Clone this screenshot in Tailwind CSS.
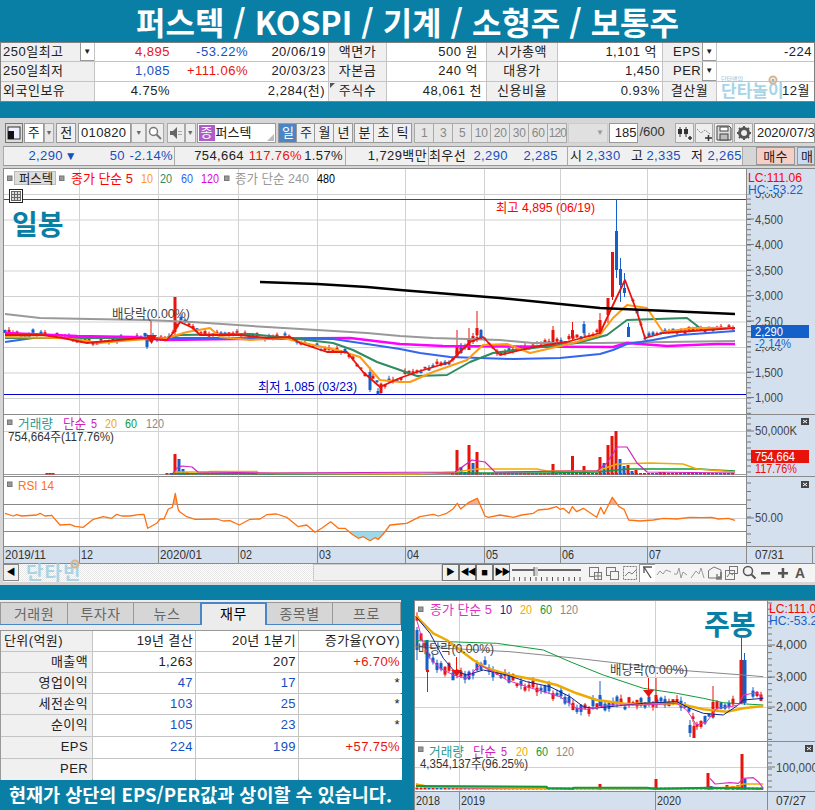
<!DOCTYPE html>
<html lang="ko">
<head>
    <meta charset="UTF-8">
    <title>퍼스텍 차트</title>
    <script src="https://cdn.jsdelivr.net/npm/@tailwindcss/browser@4"></script>
</head>
<body class="bg-[#0a7fa5]">
<div class="relative w-[815px] h-[810px] overflow-hidden bg-[#0a7fa5] text-[13px] leading-[18px] text-[#222] font-[family-name:'Liberation_Sans','Noto_Sans_CJK_KR',sans-serif]">

    <!-- title -->
    <div class="h-[42px] flex items-center justify-center text-white text-[32px] leading-[42px] font-bold whitespace-nowrap font-[family-name:'Noto_Sans_CJK_KR',sans-serif]">퍼스텍 / KOSPI / 기계 / 소형주 / 보통주</div>

    <!-- summary table -->
    <div class="relative h-[60px] border border-[#808080] bg-[#c4c4c4] grid gap-px grid-cols-[93px_233px_57px_99px_70px_104px_53px_97px] grid-rows-[18px_19px_19px] tracking-[0.5px]">
        <div class="bg-[#f0f0f0] flex justify-between pl-[2px]"><span>250일최고</span><span class="w-[14px] bg-white border-l border-b border-[#999] flex items-center justify-center text-[8px]">▼</span></div>
        <div class="bg-white grid grid-cols-[75px_78px_78px]"><span class="text-right text-[#e8140c]">4,895</span><span class="text-right text-[#1450c0]">-53.22%</span><span class="text-right">20/06/19</span></div>
        <div class="bg-[#f0f0f0] text-center">액면가</div>
        <div class="bg-white text-right pr-2">500 원</div>
        <div class="bg-[#f0f0f0] text-center">시가총액</div>
        <div class="bg-white text-right pr-[5px]">1,101 억</div>
        <div class="bg-[#f0f0f0] flex justify-between pl-[10px]"><span>EPS</span><span class="w-[14px] bg-white border-l border-b border-[#999] flex items-center justify-center text-[8px]">▼</span></div>
        <div class="bg-white text-right pr-[2px]">-224</div>

        <div class="bg-[#f0f0f0] pl-[2px]">250일최저</div>
        <div class="bg-white grid grid-cols-[75px_78px_78px]"><span class="text-right text-[#1450c0]">1,085</span><span class="text-right text-[#e8140c]">+111.06%</span><span class="text-right">20/03/23</span></div>
        <div class="bg-[#f0f0f0] text-center">자본금</div>
        <div class="bg-white text-right pr-2">240 억</div>
        <div class="bg-[#f0f0f0] text-center">대용가</div>
        <div class="bg-white text-right pr-[2px]">1,450</div>
        <div class="bg-[#f0f0f0] flex justify-between pl-[10px]"><span>PER</span><span class="w-[14px] bg-white border-l border-b border-[#999] flex items-center justify-center text-[8px]">▼</span></div>
        <div class="bg-white"></div>

        <div class="bg-[#f0f0f0] pl-[2px]">외국인보유</div>
        <div class="bg-white grid grid-cols-[75px_78px_78px]"><span class="text-right">4.75%</span><span></span><span class="text-right pr-[1px]">2,284(천)</span></div>
        <div class="relative bg-[#f0f0f0] text-center"><svg class="absolute left-[1px] top-[1px]" width="5" height="5"><polygon points="0,0 5,0 0,5" fill="#555"/></svg>주식수</div>
        <div class="bg-white text-right pr-[4px]">48,061 천</div>
        <div class="bg-[#f0f0f0] text-center">신용비율</div>
        <div class="bg-white text-right pr-[2px]">0.93%</div>
        <div class="bg-[#f0f0f0] text-center">결산월</div>
        <div class="relative bg-white text-right pr-[4px]">12월</div>

        <!-- watermark over the table -->
        <div class="absolute left-[720px] top-[33px] flex flex-col items-start tracking-normal">
            <span class="text-[6px] leading-[7px] text-[#8fc4dc]">단타맨의</span>
            <span class="text-[17px] leading-[18px] font-bold text-[#a8d4e6]">단타놀이</span>
        </div>
        <svg class="absolute left-[767px] top-[32px]" width="10" height="10"><circle cx="5" cy="5" r="3.5" fill="none" stroke="#d9b38c" stroke-width="2"/><circle cx="5" cy="5" r="1.5" fill="#8db4d8"/></svg>
    </div>

    <div class="h-[16px]"></div>

    <!-- main window -->
    <div class="h-[467px] bg-[#d6d6d6]">
        <!-- toolbar -->
        <div class="h-[28px] pt-[5px] pl-[5px] flex gap-px text-[13px] leading-[18px]">
            <div class="w-[18px] h-5 border border-[#777] bg-[#ddd] flex items-center justify-center">
                <svg width="14" height="14"><rect x="1" y="1" width="12" height="12" fill="#eef" stroke="#333"/><rect x="1" y="5" width="6" height="8" fill="#111"/></svg>
            </div>
            <div class="w-[20px] h-5 border border-[#999] bg-white text-center">주</div>
            <div class="w-[11px] h-5 border border-[#aaa] bg-[#e8e8e8] -ml-px text-[7px] text-[#666] flex items-center justify-center">▼</div>
            <div class="w-[20px] h-5 ml-px border border-[#999] bg-[#f0f0f0] text-center">전</div>
            <div class="w-[54px] h-5 ml-px border border-[#999] bg-white pl-[2px] tracking-[0.3px]">010820</div>
            <div class="w-[15px] h-5 -ml-px border border-[#aaa] bg-[#eee] text-[7px] text-[#666] flex items-center justify-center">▼</div>
            <div class="w-[18px] h-5 -ml-px border border-[#aaa] bg-[#eee] flex items-center justify-center">
                <svg width="14" height="14"><circle cx="5.5" cy="5.5" r="4" fill="#fff" stroke="#777" stroke-width="1.5"/><path d="M8.5 8.5 L13 13" stroke="#777" stroke-width="2"/></svg>
            </div>
            <div class="w-[18px] h-5 ml-[2px] border border-[#aaa] bg-[#eee] flex items-center justify-center">
                <svg width="14" height="14"><path d="M1 5 H4 L8 1 V13 L4 9 H1 Z" fill="#666"/><path d="M10 5 V6 M10 8 V9 M12 5 V6 M12 8 V9" stroke="#666"/></svg>
            </div>
            <div class="w-[11px] h-5 -ml-px border border-[#aaa] bg-[#eee] text-[7px] text-[#666] flex items-center justify-center">▼</div>
            <div class="relative w-[81px] h-5 border border-[#999] bg-white flex items-center pl-[1px] gap-[1px]">
                <span class="w-[16px] h-4 bg-[#b05cc8] text-white text-center text-[13px] leading-4">종</span><span>퍼스텍</span>
                <svg class="absolute right-[1px] bottom-[1px]" width="7" height="7"><polygon points="7,0 7,7 0,7" fill="#bbb"/></svg>
            </div>
            <div class="flex ml-px">
                <div class="w-[19px] h-5 bg-[#4a86c5] text-white text-center border border-[#999]">일</div>
                <div class="w-[19px] h-5 -ml-px bg-[#f0f0f0] text-center border border-[#999]">주</div>
                <div class="w-[20px] h-5 -ml-px bg-[#f0f0f0] text-center border border-[#999]">월</div>
                <div class="w-[20px] h-5 -ml-px bg-[#f0f0f0] text-center border border-[#999]">년</div>
            </div>
            <div class="flex">
                <div class="w-[20px] h-5 bg-[#f0f0f0] text-center border border-[#999]">분</div>
                <div class="w-[20px] h-5 -ml-px bg-[#f0f0f0] text-center border border-[#999]">초</div>
                <div class="w-[20px] h-5 -ml-px bg-[#f0f0f0] text-center border border-[#999]">틱</div>
            </div>
            <div class="flex ml-px text-[#888] text-[12px]">
                <div class="w-[20px] h-5 bg-[#e6e6e6] text-center border border-[#aaa]">1</div>
                <div class="w-[20px] h-5 -ml-px bg-[#e6e6e6] text-center border border-[#aaa]">3</div>
                <div class="w-[20px] h-5 -ml-px bg-[#e6e6e6] text-center border border-[#aaa]">5</div>
                <div class="w-[20px] h-5 -ml-px bg-[#e6e6e6] text-center border border-[#aaa]">10</div>
                <div class="w-[20px] h-5 -ml-px bg-[#e6e6e6] text-center border border-[#aaa]">20</div>
                <div class="w-[20px] h-5 -ml-px bg-[#e6e6e6] text-center border border-[#aaa]">30</div>
                <div class="w-[20px] h-5 -ml-px bg-[#e6e6e6] text-center border border-[#aaa]">60</div>
                <div class="w-[20px] h-5 -ml-px bg-[#e6e6e6] text-center border border-[#aaa] tracking-[-1px]">120</div>
            </div>
            <div class="w-[40px] h-5 bg-[#e0e0e0] border border-[#ccc] text-[8px] text-[#999] text-right pr-[3px]">▼</div>
            <div class="w-[30px] h-5 bg-white border border-[#999] text-right pr-[1px]">185</div>
            <div class="w-[35px] h-5 text-[#333]">/600</div>
            <div class="w-[19px] h-5 bg-[#eee] border border-[#aaa] flex items-center justify-center">
                <svg width="16" height="16"><path d="M4 2 V12 M10 2 V12" stroke="#333"/><rect x="2" y="4" width="4" height="5" fill="#333"/><rect x="8" y="4" width="4" height="5" fill="#333"/><path d="M12 13 H16 M14 11 V15" stroke="#333" stroke-width="1.5"/></svg>
            </div>
            <div class="w-[19px] h-5 bg-[#eee] border border-[#aaa] flex items-center justify-center">
                <svg width="16" height="16"><path d="M1 4 L5 8 L9 5 L14 9" fill="none" stroke="#888" stroke-dasharray="2 1"/><path d="M9 13 H16 M12.500 10 V16" stroke="#333" stroke-width="1.5"/></svg>
            </div>
            <div class="w-[19px] h-5 bg-[#eee] border border-[#aaa] flex items-center justify-center">
                <svg width="16" height="16"><path d="M1 1 H13 L15 3 V15 H1 Z" fill="#ddd" stroke="#444"/><rect x="4" y="2" width="8" height="4" fill="#fff" stroke="#444"/><rect x="4" y="9" width="8" height="6" fill="#bbb" stroke="#444"/></svg>
            </div>
            <div class="w-[19px] h-5 bg-[#eee] border border-[#aaa] flex items-center justify-center">
                <svg width="16" height="16"><circle cx="8" cy="8" r="4.500" fill="none" stroke="#555" stroke-width="3"/><path d="M8 1 V3 M8 13 V15 M1 8 H3 M13 8 H15 M3 3 L4.500 4.500 M11.500 11.500 L13 13 M13 3 L11.500 4.500 M3 13 L4.500 11.500" stroke="#555" stroke-width="2"/></svg>
            </div>
            <div class="w-[62px] h-5 bg-white border border-[#999] pl-[2px] whitespace-nowrap overflow-hidden">2020/07/31</div>
        </div>

        <!-- quote bar -->
        <div class="ml-[3px] h-[20px] flex border-y border-[#999] text-[#1450c0] leading-[18px] tracking-[0.4px]">
            <div class="w-[172px] flex bg-[#f0f0f0] border-l border-r border-[#aaa]">
                <span class="w-[59px] text-right">2,290</span><span class="w-[14px] text-[12px] text-right leading-[18px]">▼</span>
                <span class="w-[48px] text-right">50</span><span class="w-[48px] text-right">-2.14%</span>
            </div>
            <div class="w-[171px] flex bg-[#f0f0f0] border-r border-[#aaa]">
                <span class="w-[69px] text-right text-[#222]">754,664</span><span class="w-[58px] text-right text-[#e8140c]">117.76%</span><span class="w-[41px] text-right text-[#222]">1.57%</span>
            </div>
            <div class="w-[83px] bg-[#f0f0f0] border-r border-[#aaa] text-right pr-[1px] text-[#222]">1,729백만</div>
            <div class="w-[139px] flex bg-[#f0f0f0] border-r border-[#aaa]">
                <span class="w-[38px] shrink-0 text-[#222] whitespace-nowrap">최우선</span><span class="w-[41px] text-right">2,290</span><span class="w-[50px] text-right">2,285</span>
            </div>
            <div class="w-[175px] flex bg-[#f0f0f0] border-r border-[#aaa]">
                <span class="w-[18px] pl-[2px] text-[#222]">시</span><span class="w-[34px] text-right">2,330</span><span class="ml-[11px] w-[13px] text-[#222]">고</span><span class="w-[37px] text-right">2,335</span><span class="ml-[10px] w-[13px] text-[#222]">저</span><span class="w-[38px] text-right">2,265</span>
            </div>
            <div class="w-[13px] bg-[#d6d6d6]"></div>
            <div class="w-[39px] bg-[#f4cfc8] border border-[#999] text-center text-[#222]">매수</div>
            <div class="flex-1 ml-[2px] bg-[#c8dcf4] border border-[#999] text-[#222] pl-[3px] overflow-hidden">매</div>
        </div>

        <!-- charts -->
        <div class="ml-[3px] mt-[2px] w-[812px] border-t border-[#8a8a8a]">
            <svg id="pane-main" class="block w-[812px] h-[245px]" viewBox="3 169 812 245"></svg>
            <svg id="pane-vol" class="block w-[812px] h-[62px]" viewBox="3 414 812 62"></svg>
            <svg id="pane-rsi" class="block w-[812px] h-[70px]" viewBox="3 476 812 70"></svg>
            <svg id="pane-axis" class="block w-[812px] h-[18px]" viewBox="3 546 812 18"></svg>
        </div>

        <!-- scroll bar and chart tools -->
        <div class="relative ml-[3px] w-[812px] h-[18px] flex bg-[#f4f4f4]">
            <div class="w-[16px] h-[17px] bg-[#f0f0f0] border border-[#888] text-[9px] leading-[15px] text-center text-black">◀</div>
            <div class="w-[294px] h-[17px] bg-[repeating-conic-gradient(#e6e6e6_0_25%,#ffffff_0_50%)] bg-[length:2px_2px]"></div>
            <div class="w-[129px] h-[17px] bg-[#f0f0f0] border border-[#ccc]"></div>
            <div class="w-[17px] h-[17px] bg-[#f0f0f0] border border-[#777] text-[9px] leading-[15px] text-center text-black">▶</div>
            <div class="w-[17px] h-[17px] bg-[#f0f0f0] border border-[#777] text-[9px] leading-[15px] text-center text-black tracking-[-2px]">◀◀</div>
            <div class="w-[17px] h-[17px] bg-[#f0f0f0] border border-[#777] text-[11px] leading-[14px] text-center text-black">■</div>
            <div class="w-[17px] h-[17px] bg-[#f0f0f0] border border-[#777] text-[9px] leading-[15px] text-center text-black tracking-[-2px]">▶▶</div>
            <svg id="tools" class="block w-[301px] h-[18px]" viewBox="514 564 301 18"></svg>

            <!-- watermark over the scroll bar -->
            <span class="absolute left-[23px] top-[-2px] text-[19px] leading-[24px] font-bold text-[#a8d4e6] tracking-[1px]">단타빈</span>
            <svg class="absolute left-[67px] top-[-5px]" width="10" height="10"><circle cx="5" cy="5" r="3.500" fill="none" stroke="#d9b38c" stroke-width="2"/><circle cx="5" cy="5" r="1.500" fill="#8db4d8"/></svg>
        </div>
    </div>

    <div class="h-[15px]"></div>

    <!-- bottom area -->
    <div class="h-[210px] flex">
        <div class="w-[401px] flex flex-col">
            <!-- tabs -->
            <div class="h-[30px] pt-[2px] bg-[#ececec]">
                <div class="h-[23px] flex border-b border-[#4a86c5] text-[14px] leading-[22px] text-center text-[#666] tracking-[0.5px]">
                    <div class="w-[68px] bg-[#d6d6d6] border border-b-0 border-[#999]">거래원</div>
                    <div class="w-[66px] bg-[#d6d6d6] border-t border-r border-[#999]">투자자</div>
                    <div class="w-[66px] bg-[#d6d6d6] border-t border-[#999]">뉴스</div>
                    <div class="w-[67px] h-[23px] bg-[#ececec] border-2 border-b-0 border-[#4a86c5] text-black leading-[20px]">재무</div>
                    <div class="w-[66px] bg-[#d6d6d6] border-t border-r border-[#999]">종목별</div>
                    <div class="w-[68px] bg-[#d6d6d6] border-t border-r border-[#999]">프로</div>
                </div>
            </div>
            <!-- financials -->
            <div class="h-[150px] border border-[#999] bg-[#c4c4c4] grid gap-px grid-cols-[91px_102px_102px_103px] grid-rows-[20px_20px_20px_20px_21px_21px_21px] leading-[20px] tracking-[0.4px]">
                <div class="bg-[#f0f0f0] pl-[3px]">단위(억원)</div>
                <div class="bg-white text-right pr-[2px]">19년 결산</div>
                <div class="bg-white text-right pr-[2px]">20년 1분기</div>
                <div class="bg-white text-right pr-[2px]">증가율(YOY)</div>

                <div class="bg-[#f0f0f0] text-right pr-1">매출액</div>
                <div class="bg-white text-right pr-[2px]">1,263</div>
                <div class="bg-white text-right pr-[2px]">207</div>
                <div class="bg-white text-right pr-[2px] text-[#e8140c]">+6.70%</div>

                <div class="bg-[#f0f0f0] text-right pr-1">영업이익</div>
                <div class="bg-white text-right pr-[2px] text-[#1450c0]">47</div>
                <div class="bg-white text-right pr-[2px] text-[#1450c0]">17</div>
                <div class="bg-white text-right pr-[2px]">*</div>

                <div class="bg-[#f0f0f0] text-right pr-1">세전손익</div>
                <div class="bg-white text-right pr-[2px] text-[#1450c0]">103</div>
                <div class="bg-white text-right pr-[2px] text-[#1450c0]">25</div>
                <div class="bg-white text-right pr-[2px]">*</div>

                <div class="bg-[#f0f0f0] text-right pr-1">순이익</div>
                <div class="bg-white text-right pr-[2px] text-[#1450c0]">105</div>
                <div class="bg-white text-right pr-[2px] text-[#1450c0]">23</div>
                <div class="bg-white text-right pr-[2px]">*</div>

                <div class="bg-[#f0f0f0] text-right pr-1">EPS</div>
                <div class="bg-white text-right pr-[2px] text-[#1450c0]">224</div>
                <div class="bg-white text-right pr-[2px] text-[#1450c0]">199</div>
                <div class="bg-white text-right pr-[2px] text-[#e8140c]">+57.75%</div>

                <div class="bg-[#f0f0f0] text-right pr-1">PER</div>
                <div class="bg-white"></div>
                <div class="bg-white"></div>
                <div class="bg-white"></div>
            </div>
            <div class="h-[30px] text-center text-white text-[18.500px] leading-[28px] font-bold font-[family-name:'Noto_Sans_CJK_KR',sans-serif] whitespace-nowrap">현재가 상단의 EPS/PER값과 상이할 수 있습니다.</div>
        </div>
        <div class="w-[13px]"></div>
        <div class="w-[401px] border-t border-[#8a8a8a]">
            <svg id="week-main" class="block w-[401px] h-[140px]" viewBox="414 601 401 140"></svg>
            <svg id="week-vol" class="block w-[401px] h-[50px]" viewBox="414 741 401 50"></svg>
            <svg id="week-axis" class="block w-[401px] h-[19px]" viewBox="414 791 401 19"></svg>
        </div>
    </div>
</div>

<script>
    const FONT = "'Liberation Sans','Noto Sans CJK KR',sans-serif";
    const AXIS = "#d5e0ee", GRID = "#d2d2d2", FRAME = "#8a8a8a";
    const RED = "#e8140c", BLUE = "#1460c8";

    let seed = 12345;
    function rnd() {
        seed = (seed * 16807) % 2147483647;
        return seed / 2147483647;
    }

    function line(x1, y1, x2, y2, color, w = 1) {
        return `<line x1="${x1}" y1="${y1}" x2="${x2}" y2="${y2}" stroke="${color}" stroke-width="${w}"/>`;
    }
    function rect(x, y, w, h, color) {
        return `<rect x="${x}" y="${y}" width="${w}" height="${h}" fill="${color}"/>`;
    }
    function poly(pts, color, w) {
        return `<polyline points="${pts.map(p => p.join(",")).join(" ")}" fill="none" stroke="${color}" stroke-width="${w}" stroke-linejoin="round"/>`;
    }
    // y is the text's vertical centre, len squeezes it to the width in the picture
    function text(x, y, str, color = "#333", size = 13, len = 0, weight = 400) {
        const fit = len ? ` textLength="${len}" lengthAdjust="spacingAndGlyphs"` : "";
        return `<text x="${x}" y="${y + size * 0.36}" fill="${color}" font-size="${size}" font-weight="${weight}" font-family="${FONT}"${fit}>${str}</text>`;
    }
    function square(x, y) {
        return `<rect x="${x}" y="${y}" width="4.500" height="4.500" fill="#999" stroke="#777"/>`;
    }
    function closeIcon(x, y) {
        return rect(x, y, 8, 7, "#444") + line(x + 2, y + 2, x + 6, y + 5, "#fff") + line(x + 6, y + 2, x + 2, y + 5, "#fff");
    }
    function interp(pts, x) {
        for (let i = 1; i < pts.length; i++) {
            if (x <= pts[i][0]) {
                const [x0, y0] = pts[i - 1], [x1, y1] = pts[i];
                return y0 + (y1 - y0) * (x - x0) / (x1 - x0);
            }
        }
        return pts[pts.length - 1][1];
    }
    function candle(x, wickTop, top, bottom, wickBottom, color, w = 3) {
        return line(x, wickTop, x, wickBottom, color) + rect(x - w / 2, top, w, Math.max(bottom - top, 1), color);
    }
    function zoomPts(pts, ox, oy) {
        return pts.map(([X, Y]) => [+(ox + X / 3).toFixed(1), +(oy + Y / 3).toFixed(1)]);
    }

    /* ---------- daily: main pane ---------- */
    const ma480 = [[260,282],[317,284],[367,287],[400,290],[500,298],[600,308],[735,314]];
    const ma240 = [[5,314],[40,318],[90,319],[147,320],[192,322],[267,327],[317,330],[367,333],[400,336],[433,338],[500,340],[533,343],[600,343],[735,341]];
    const ma120 = [[5,333],[77,336],[133,337],[167,340],[233,339],[350,338],[400,344],[443,346],[613,347],[627,343],[667,346],[717,344],[735,344]];
    const ma60 = [[5,342],[33,338],[100,338],[233,338],[333,339],[367,344],[400,349],[420,353],[450,357],[513,359],[560,358],[600,354],[613,350],[627,344],[653,340],[680,335],[735,331]];
    const ma20 = [[5,338],[167,338],[180,335],[250,334],[290,338],[333,343],[353,350],[377,362],[400,370],[417,376],[447,375],[470,362],[493,353],[533,348],[577,343],[607,335],[627,320],[687,318],[700,328],[735,328]];
    const ma10 = [[5,337],[60,338],[80,340],[100,343],[133,340],[167,338],[187,332],[210,328],[220,337],[250,340],[283,338],[313,345],[337,350],[360,357],[380,380],[400,382],[410,382],[433,372],[467,360],[483,345],[507,344],[530,353],[573,343],[600,335],[613,318],[627,305],[647,308],[663,332],[693,328],[735,328]];
    const ma5 = [[5,335],[43,335],[63,338],[87,343],[97,342],[140,338],[167,340],[173,333],[180,322],[193,328],[200,335],[240,335],[267,338],[290,337],[300,343],[327,352],[347,352],[363,372],[380,387],[400,378],[417,372],[450,362],[470,342],[483,337],[500,355],[533,347],[567,342],[600,333],[613,305],[625,280],[637,312],[645,338],[663,333],[735,328]];

    let h = rect(3, 169, 744, 245, "#fff") + rect(747, 169, 68, 245, AXIS) + line(746.500, 169, 746.500, 414, FRAME);
    for (let i = 0; i < 9; i++) h += line(4, 194.500 + i * 25.500, 746, 194.500 + i * 25.500, GRID);
    for (const x of [79.500, 158.500, 238.500, 317.500, 405.500, 484.500, 560.500, 647.500]) h += line(x, 169, x, 414, GRID);
    h += line(3.500, 169, 3.500, 414, FRAME);
    h += line(4, 199.500, 746, 199.500, "#ff0000") + line(4, 394.500, 746, 394.500, "#0000cc");

    for (let x = 5; x < 735; x += 4) {
        if (x > 604 && x < 630) continue;
        const c = interp(ma5, x) + (rnd() - 0.5) * 5;
        const body = 1 + rnd() * 2.500;
        const color = rnd() < 0.6 ? RED : BLUE;
        h += candle(x, c - body - rnd() * 3, c - body, c, c + rnd() * 2, color);
    }
    h += candle(175, 297, 297, 332, 335, RED) + candle(147, 334, 337, 347, 349, BLUE);
    h += candle(457, 330, 347, 358, 358, RED) + candle(461, 343, 348, 353, 354, BLUE);
    h += candle(469, 328, 338, 350, 350, RED) + candle(473, 333, 336, 342, 344, RED);
    h += candle(477, 311, 328, 335, 336, RED) + candle(481, 329, 330, 338, 339, BLUE);
    h += candle(553, 326, 330, 342, 342, RED) + candle(572.500, 322, 330, 338, 340, RED);
    h += candle(584, 321, 324, 333, 335, BLUE) + candle(600, 313, 320, 333, 334, RED);
    h += candle(608, 298, 298, 315, 323, RED) + candle(612.500, 252, 252, 297, 300, RED);
    h += candle(616.500, 199, 231, 270, 278, BLUE) + candle(620.500, 258, 269, 285, 302, BLUE);
    h += candle(624.500, 273, 288, 293, 297, BLUE) + candle(628.500, 323, 327, 337, 337, BLUE);
    h += candle(370, 367, 372, 390, 392, BLUE) + candle(378, 388, 391, 394, 395, BLUE) + candle(381, 384, 386, 393, 394, RED);

    h += poly(ma240, "#999", 2) + poly(ma120, "#ff00ff", 2.500) + poly(ma60, "#3366ee", 2);
    h += poly(ma20, "#2e8b62", 2) + poly(ma10, "#ff9a14", 2) + poly(ma5, "#e8140c", 1.800) + poly(ma480, "#000", 2.400);

    // markers and captions on the plot
    h += text(496, 207, "최고 4,895 (06/19)", "#f00", 13, 99) + text(258, 386, "최저 1,085 (03/23)", "#00c", 13, 99);
    h += text(112, 313, "배당락(0.00%)", "#444", 13, 78);
    h += line(151, 321, 151, 336, RED) + `<polygon points="146,335 157,335 151.500,344" fill="${RED}"/>`;
    h += text(12, 225, "일봉", "#0a7fa5", 28, 0, 700);
    h += `<rect x="9.500" y="189.500" width="13" height="13" fill="#fff" stroke="#222"/><rect x="11.500" y="191.500" width="9" height="9" fill="#ddd" stroke="#666"/><path d="M11.500 194.500 H20.500 M11.500 197.500 H20.500 M14.500 191.500 V200.500 M17.500 191.500 V200.500" stroke="#666"/>`;

    // legend
    h += square(7.500, 176) + `<rect x="14.500" y="171.500" width="41" height="13" fill="#ddd" stroke="#bbb"/>` + text(19, 178, "퍼스텍", "#222", 13, 34);
    h += square(59.500, 176) + text(71, 178, "종가 단순 5", "#f00", 13, 62) + text(141, 178, "10", "#ff9a14", 13, 12);
    h += text(160, 178, "20", "#2e8b62", 13, 12) + text(181, 178, "60", "#3366ee", 13, 12) + text(201, 178, "120", "#e000e0", 13, 18);
    h += square(224.500, 176) + text(235, 178, "종가 단순 240", "#999", 13, 74) + text(317, 178, "480", "#000", 13, 18);

    // price axis
    for (let y = 194; y < 414; y += 5.100) h += line(747, y, 751, y, "#777");
    ["5,000", "4,500", "4,000", "3,500", "3,000", "2,500", "2,000", "1,500", "1,000"].forEach((v, i) => {
        const y = 193.500 + i * 25.500;
        h += line(747, y, 754, y, "#777") + text(755, y, v, "#444", 13, 28);
    });
    h += rect(747, 170, 68, 24, AXIS);
    h += text(748, 177, "LC:111.06", "#f00", 13, 54) + text(748, 189, "HC:-53.22", BLUE, 13, 55);
    h += rect(751, 325, 58, 13, BLUE) + text(755, 331, "2,290", "#fff", 13, 28);
    h += rect(751, 338, 60, 10, AXIS) + text(755, 343, "-2.14%", BLUE, 13, 36);
    document.getElementById("pane-main").innerHTML = h;

    /* ---------- daily: volume ---------- */
    h = rect(3, 414, 744, 62, "#fff") + rect(747, 414, 68, 62, AXIS);
    h += line(4, 431.500, 746, 431.500, GRID) + line(4, 474.500, 746, 474.500, "#999");
    for (const x of [79.500, 158.500, 238.500, 317.500, 405.500, 484.500, 560.500, 647.500]) h += line(x, 414, x, 476, GRID);
    h += line(3, 414.500, 815, 414.500, FRAME) + line(3.500, 414, 3.500, 476, FRAME) + line(746.500, 414, 746.500, 476, FRAME);
    const volBars = [[47,473,RED],[50,473,RED],[53,473,RED],[167,473,RED],[171,473,BLUE],[175,454,RED],[179,459,BLUE],[183,469,BLUE],[187,472,RED],[457,450,RED],[461,467,BLUE],[465,472,BLUE],[469,445,RED],[473,463,BLUE],[477,452,RED],[553,464,RED],[572.500,456,RED],[584,466,RED],[600,457,RED],[604,463,BLUE],[608,445,RED],[612,436,RED],[616,431,RED],[620,459,BLUE],[624,466,BLUE],[628,465,RED],[632,471,BLUE],[636,470,RED],[660,472,RED],[664,472,RED]];
    for (let x = 171; x < 735; x += 4) {
        if (x > 272 && x < 448) continue;
        h += rect(x, 473, 3, 1.500, rnd() < 0.5 ? RED : BLUE);
    }
    for (const [x, top, color] of volBars) h += rect(x - 1.500, top, 3, 474.500 - top, color);
    h += poly([[173,473.500],[400,474],[455,473],[550,473],[597,472],[627,469],[700,469],[715,470],[735,471]], "#109a3c", 1.500);
    h += poly([[173,472],[207,472],[210,471.500],[257,471.500],[258,473],[400,474],[417,474],[455,472],[477,469],[537,469],[547,471],[597,471],[617,464],[650,463],[683,464],[697,469],[735,472]], "#eeaa00", 1.500);
    h += poly([[173,473],[177,468],[182,466],[192,467],[198,472],[273,473],[455,472],[462,467],[472,460],[485,462],[495,472],[570,471],[597,471],[607,463],[617,447],[627,447],[637,463],[647,472],[735,473]], "#d020c0", 1.200);
    h += square(7.500, 420) + text(18, 423, "거래량", "#2a9a90", 13, 35) + text(63, 423, "단순", "#d020c0", 13, 23) + text(91, 423, "5", "#d020c0", 13, 6);
    h += text(105, 423, "20", "#eeaa00", 13, 12) + text(125, 423, "60", "#109a3c", 13, 12) + text(146, 423, "120", "#888", 13, 18);
    h += text(8, 436, "754,664주(117.76%)", "#333", 13, 106);
    for (let y = 418; y < 476; y += 6) h += line(747, y, 751, y, "#777");
    h += line(747, 431, 754, 431, "#777") + text(755, 430, "50,000K", "#444", 13, 42);
    h += rect(751, 450, 58, 13, RED) + text(755, 456, "754,664", "#fff", 13, 40) + text(755, 468, "117.76%", RED, 13, 42) + closeIcon(801, 418);
    document.getElementById("pane-vol").innerHTML = h;

    /* ---------- daily: RSI ---------- */
    const rsi = zoomPts([[15,310],[40,318],[50,314],[65,318],[110,315],[120,310],[135,318],[155,316],[180,345],[210,343],[225,349],[250,352],[280,328],[310,320],[335,325],[350,313],[365,318],[390,318],[415,314],[432,313],[443,355],[470,340],[480,327],[492,327],[505,297],[517,292],[526,250],[535,300],[540,306],[560,320],[585,328],[650,327],[670,333],[690,332],[718,345],[750,328],[780,327],[800,314],[830,312],[860,322],[895,350],[920,345],[945,367],[965,355],[992,335],[1015,355],[1035,355],[1055,372],[1075,385],[1090,380],[1110,392],[1125,383],[1135,388],[1150,372],[1170,345],[1200,342]], 0, 410)
        .concat(zoomPts([[20,340],[60,320],[100,313],[115,318],[140,310],[160,296],[172,280],[182,297],[205,278],[232,265],[255,318],[265,322],[300,315],[340,322],[365,315],[400,310],[415,300],[445,297],[470,290],[480,298],[490,295],[507,310],[517,290],[530,305],[550,295],[570,308],[590,322],[602,292],[612,312],[637,262],[657,290],[672,298],[686,330],[720,333],[760,330],[790,325],[830,327],[870,322],[905,323],[935,322],[955,327],[985,325],[1005,331]], 400, 410));
    h = rect(3, 476, 744, 70, "#fff") + rect(747, 476, 68, 70, AXIS);
    for (const x of [79.500, 158.500, 238.500, 317.500, 405.500, 484.500, 560.500, 647.500]) h += line(x, 476, x, 546, GRID);
    h += line(4, 518.500, 746, 518.500, GRID) + line(4, 504.500, 746, 504.500, "#888") + line(4, 531.500, 746, 531.500, "#888");
    h += line(3, 476.500, 815, 476.500, FRAME) + line(3.500, 476, 3.500, 546, FRAME) + line(746.500, 476, 746.500, 546, FRAME);
    const area = rsi.map(p => p.join(",")).join(" ");
    h += `<clipPath id="rsi-hi"><rect x="0" y="476" width="815" height="28.500"/></clipPath><clipPath id="rsi-lo"><rect x="0" y="531.500" width="815" height="15"/></clipPath>`;
    h += `<polygon points="${area} 735,518 5,518" fill="#f4b090" clip-path="url(#rsi-hi)"/>`;
    h += `<polygon points="${area} 735,518 5,518" fill="#9fd8ea" clip-path="url(#rsi-lo)"/>`;
    h += poly(rsi, "#ff7010", 1.300);
    h += square(7.500, 482) + text(18, 485, "RSI 14", "#ff7010", 13, 36);
    for (let y = 483; y < 546; y += 8.500) h += line(747, y, 751, y, "#777");
    h += line(747, 518, 754, 518, "#777") + text(755, 517, "50.00", "#444", 13, 28) + closeIcon(801, 481);
    document.getElementById("pane-rsi").innerHTML = h;

    /* ---------- daily: date axis ---------- */
    h = rect(3, 546, 812, 18, AXIS) + line(3, 546.500, 815, 546.500, FRAME) + line(3, 563.500, 815, 563.500, FRAME) + line(3.500, 546, 3.500, 564, FRAME);
    [[79.500,"12"],[158.500,"2020/01"],[238.500,"02"],[317.500,"03"],[405.500,"04"],[484.500,"05"],[560.500,"06"],[647.500,"07"],[746.500,""]].forEach(([x, s]) => {
        h += line(x, 546, x, 564, FRAME) + text(x + 1.500, 554.500, s, "#333", 13, s.length * 6);
    });
    h += text(5, 554.500, "2019/11", "#333", 13, 41) + text(755, 554.500, "07/31", "#333", 13, 29) + line(812.500, 546, 812.500, 564, FRAME);
    document.getElementById("pane-axis").innerHTML = h;

    /* ---------- tools next to the scroll bar ---------- */
    h = rect(516, 569, 69, 2, "#666") + rect(538, 567, 4, 9, "#ccc") + line(538, 567, 538, 576, "#555");
    for (let x = 518; x < 586; x += 5.500) h += line(x, 577, x, 581, "#555");
    const g = "#777";
    h += `<g fill="none" stroke="${g}">
        <rect x="593.500" y="567.500" width="9" height="9"/><rect x="598.500" y="572.500" width="7" height="7" fill="#f4f4f4"/><path d="M602 572.500 V579.500 M598.500 576 H605.500"/>
        <rect x="610.500" y="567.500" width="9" height="8"/><rect x="614.500" y="571.500" width="8" height="8" fill="#f4f4f4"/>
        <rect x="627.500" y="566.500" width="13" height="13" stroke-dasharray="2 1"/><path d="M629 576 L633 572 L636 574 L640 570"/>
        <path d="M661 575 L664 571 L667 574 L670 570 L675 572" stroke="#999"/>
        <path d="M678 574 L681 574 L683 568 L685 578 L687 572 L691 575" stroke="#999"/>
        <path d="M695 578 L700 571 L703 574 L705 568 L708 578" stroke="#999"/>
        <path d="M712.500 570.500 L718 567 L725 570 V578 H712.500 Z"/><path d="M721 580 V574 M723 580 V576 M725 580 V572" stroke="#444"/>
        <rect x="729.500" y="570.500" width="9" height="9"/><rect x="733.500" y="566.500" width="8" height="7"/><path d="M731 577 L734 573 L737 575"/>
    </g>`;
    h += rect(643, 564, 16, 18, "#fff") + line(643.500, 564, 643.500, 582, "#999") + line(643, 564.500, 659, 564.500, "#999");
    h += `<path d="M647 567 H656 M648 567 L655 578 M648 567 V573 M648 567 H654" fill="none" stroke="#555" stroke-width="1.300"/>`;
    h += `<circle cx="752" cy="571" r="4.500" fill="none" stroke="#555" stroke-width="1.500"/><path d="M755.500 574.500 L759.500 578.500" stroke="#555" stroke-width="2"/>`;
    h += rect(765, 572, 9, 2.500, "#555") + rect(782, 572, 10, 2.500, "#555") + rect(785.700, 568, 2.500, 10, "#555");
    h += text(799, 573, "A", "#555", 15, 10, 700);
    document.getElementById("tools").innerHTML = h;

    /* ---------- weekly chart ---------- */
    const wx = pts => zoomPts(pts, 410, 600);
    const w5 = wx([[20,60],[40,130],[60,175],[90,205],[130,225],[170,235],[210,195],[250,215],[290,240],[350,260],[400,275],[450,290],[500,325],[530,328],[600,315],[700,315],[800,310],[830,330],[860,375],[890,365],[920,325],[960,320],[985,315],[1000,285],[1040,278],[1060,295]]);
    const w10 = wx([[18,50],[60,100],[100,175],[130,210],[170,225],[220,210],[290,225],[350,245],[420,260],[480,290],[520,320],[550,325],[700,310],[800,305],[840,325],[880,340],[940,345],[985,315],[1000,300],[1060,295]]);
    const w20 = wx([[18,48],[40,70],[70,100],[110,120],[150,150],[190,180],[230,205],[300,225],[380,240],[440,255],[500,280],[560,300],[650,312],[800,310],[880,328],[950,335],[1000,325],[1060,318]]);
    const w60 = wx([[18,122],[260,130],[400,150],[480,185],[580,225],[700,265],[800,280],[880,295],[940,308],[1060,315]]);
    const w120 = wx([[18,140],[300,155],[500,175],[800,210],[1000,225],[1060,230]]);

    h = rect(414, 601, 354, 140, "#fff") + rect(768, 601, 47, 140, AXIS);
    for (const y of [645, 677, 707]) h += line(415, y + 0.500, 767, y + 0.500, GRID);
    for (const x of [459.500, 655.500]) h += line(x, 601, x, 741, GRID);
    h += line(767.500, 601, 767.500, 741, FRAME) + line(414.500, 601, 414.500, 741, FRAME);

    for (let x = 417; x < 763; x += 4) {
        if (x > 735 && x < 750) continue;
        const c = interp(w5, x) + (rnd() - 0.5) * 8;
        const body = 2 + rnd() * 4;
        const color = rnd() < 0.5 ? RED : BLUE;
        h += candle(x, c - body - rnd() * 4, c - body, c + body * 0.3, c + body * 0.3 + rnd() * 4, color);
    }
    h += candle(417, 627, 630, 650, 660, BLUE) + candle(427, 640, 640, 670, 671, BLUE) + candle(427.500, 670, 670, 672, 692, RED);
    h += candle(741.500, 637, 660, 703, 704, RED, 4) + candle(744.500, 653, 660, 703, 705, BLUE, 4);
    h += candle(713, 686, 702, 717, 718, RED, 3) + candle(690, 720, 725, 733, 737, BLUE, 3) + candle(694, 722, 726, 738, 738, RED, 3);
    h += candle(600, 681, 695, 706, 706, BLUE) + candle(656, 678, 695, 703, 708, RED);

    h += poly(w120, "#888", 1) + poly(w60, "#109a3c", 1) + poly(w20, "#eeaa00", 2.500) + poly(w10, "#102090", 1) + poly(w5, "#e030c0", 1);
    h += line(456.500, 657, 456.500, 673, RED) + `<polygon points="451,670 462,670 456.500,676" fill="${RED}"/>`;
    h += line(648.500, 678, 648.500, 693, RED) + `<polygon points="643,690 654,690 648.500,697" fill="${RED}"/>`;
    h += text(418, 648, "배당락(0.00%)", "#444", 13, 76) + text(610, 669, "배당락(0.00%)", "#444", 13, 78);
    h += text(704, 625, "주봉", "#0a7fa5", 28, 0, 700);
    h += square(418.500, 607) + text(430, 609, "종가 단순 5", "#e030c0", 13, 62) + text(500, 609, "10", "#102090", 13, 12);
    h += text(520, 609, "20", "#eeaa00", 13, 12) + text(540, 609, "60", "#109a3c", 13, 12) + text(560, 609, "120", "#888", 13, 18);
    for (let y = 603; y < 741; y += 6.200) h += line(768, y, 772, y, "#777");
    [["4,000", 645], ["3,000", 677], ["2,000", 707]].forEach(([v, y]) => {
        h += line(768, y, 775, y, "#777") + text(776, y - 1, v, "#444", 13, 31);
    });
    h += text(769, 608, "LC:111.06", "#f00", 13, 54) + text(769, 620, "HC:-53.22", BLUE, 13, 55);
    document.getElementById("week-main").innerHTML = h;

    h = rect(414, 741, 354, 50, "#fff") + rect(768, 741, 47, 50, AXIS);
    h += line(415, 767.500, 767, 767.500, GRID);
    for (const x of [459.500, 655.500]) h += line(x, 741, x, 791, GRID);
    h += line(414, 741.500, 815, 741.500, FRAME) + line(767.500, 741, 767.500, 791, FRAME) + line(414.500, 741, 414.500, 791, FRAME);
    for (let x = 417; x < 763; x += 4) h += rect(x - 1.500, 787.500, 3, 2, rnd() < 0.5 ? RED : BLUE);
    for (const [x, top, color] of [[600,784,RED],[656,779,RED],[708,773,RED],[711,786,BLUE],[733,786,RED],[742,754,RED],[745,779,BLUE],[738,785,RED],[727,785,RED]]) {
        h += rect(x - 1.500, top, 3, 789.500 - top, color);
    }
    h += poly(wx([[18,552],[40,560],[200,565],[800,566],[900,562],[1060,567]]), "#e030c0", 1.200);
    h += poly(wx([[18,552],[40,556],[60,562],[420,565],[700,567],[900,565],[980,560],[1000,552],[1060,552]]), "#eeaa00", 1.500);
    h += poly(wx([[18,558],[410,560],[412,565],[490,566],[490,563],[710,563],[735,566],[900,563],[1060,566]]), "#109a3c", 2);
    h += poly(wx([[900,535],[915,552],[960,548],[985,550],[1000,535],[1030,533],[1045,545],[1060,565]]), "#e030c0", 1.200);
    h += square(418.500, 747) + text(429, 751, "거래량", "#2a9a90", 13, 35) + text(473, 751, "단순", "#d020c0", 13, 23) + text(501, 751, "5", "#d020c0", 13, 6);
    h += text(516, 751, "20", "#eeaa00", 13, 12) + text(536, 751, "60", "#109a3c", 13, 12) + text(556, 751, "120", "#888", 13, 18);
    h += text(420, 763, "4,354,137주(96.25%)", "#333", 13, 108);
    for (let y = 745; y < 791; y += 6) h += line(768, y, 772, y, "#777");
    h += line(768, 767, 775, 767, "#777") + text(776, 767, "100,000", "#444", 13, 42) + closeIcon(805, 745);
    document.getElementById("week-vol").innerHTML = h;

    h = rect(414, 791, 401, 19, AXIS) + line(414, 791.500, 815, 791.500, FRAME) + line(414.500, 791, 414.500, 810, FRAME);
    h += text(416, 800, "2018", "#333", 13, 24) + line(459.500, 791, 459.500, 810, FRAME) + text(461, 800, "2019", "#333", 13, 24);
    h += line(655.500, 791, 655.500, 810, FRAME) + text(657, 800, "2020", "#333", 13, 24);
    h += line(767.500, 791, 767.500, 810, FRAME) + text(776, 800, "07/27", "#333", 13, 30);
    document.getElementById("week-axis").innerHTML = h;
</script>
</body>
</html>
